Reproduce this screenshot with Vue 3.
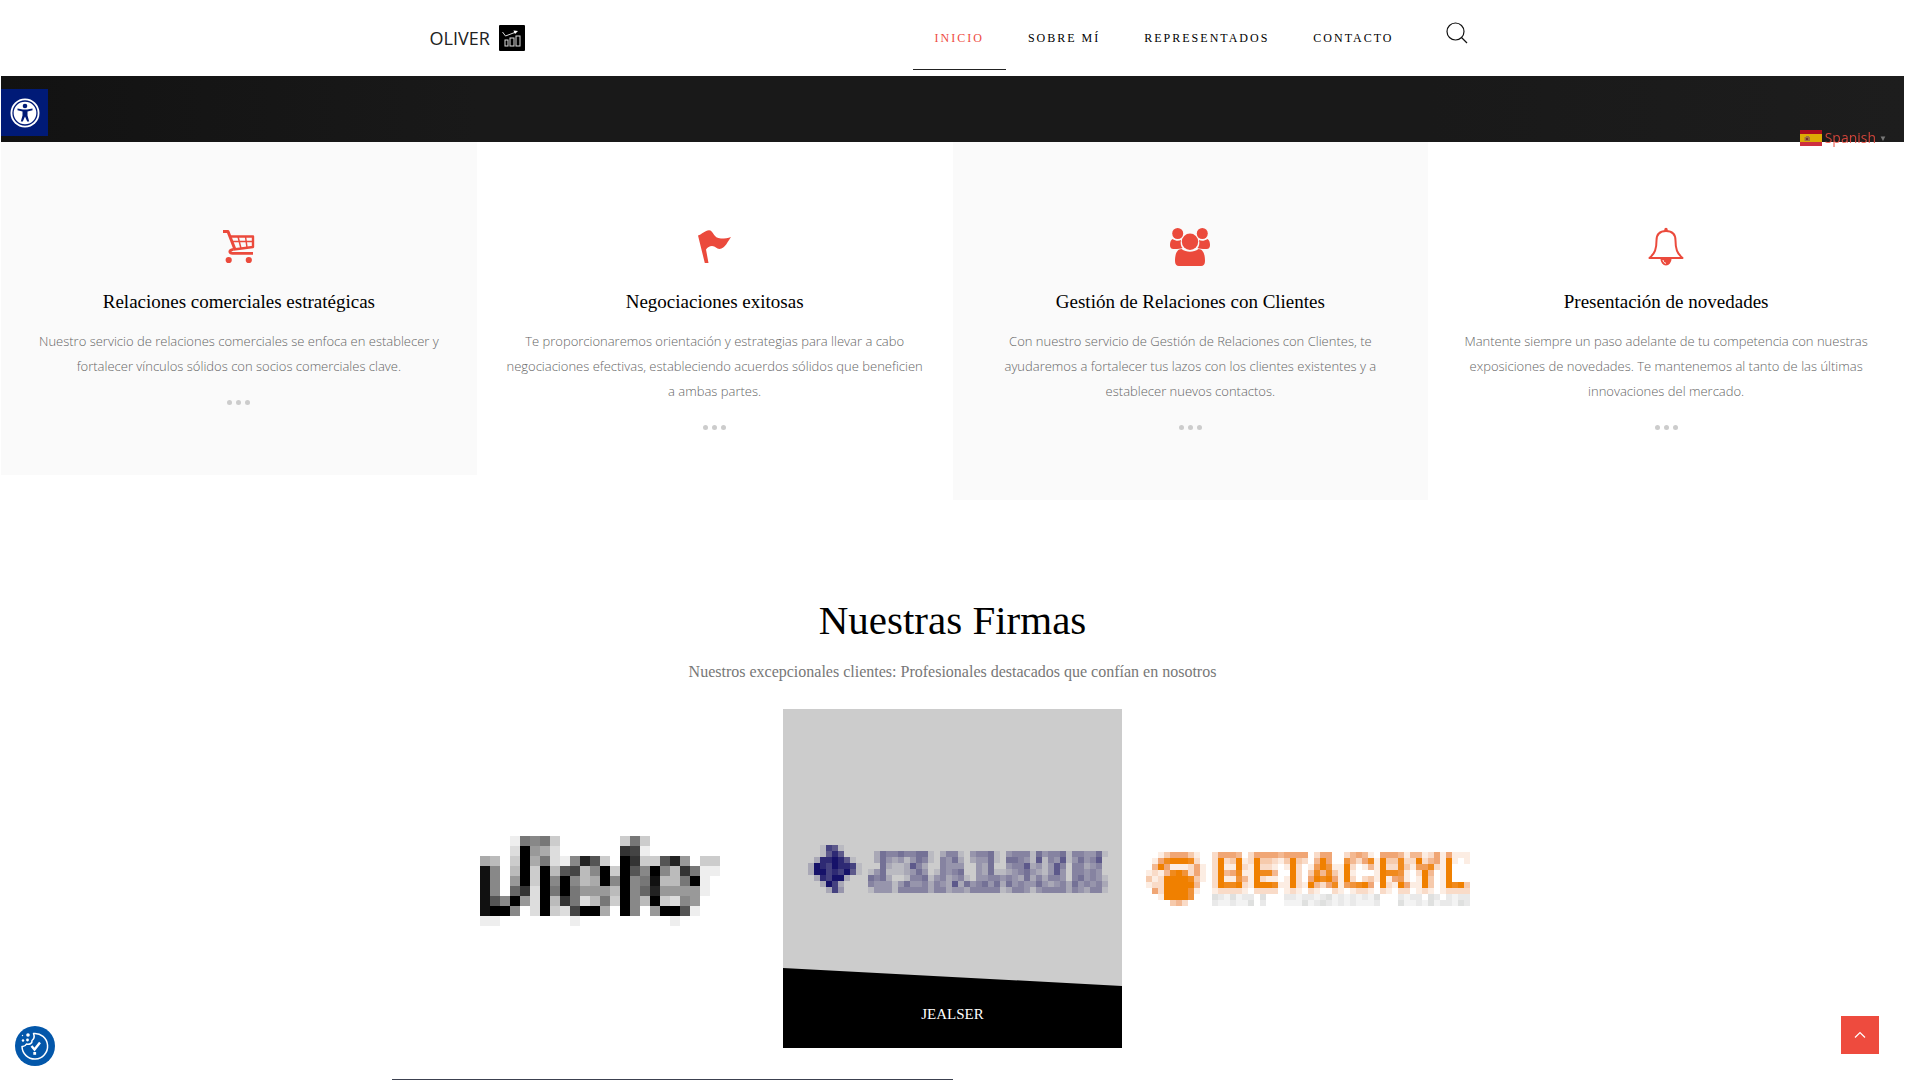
<script setup>
import { ref } from 'vue';

const active = ref('INICIO');
const menu = ['INICIO', 'SOBRE MÍ', 'REPRESENTADOS', 'CONTACTO'];

const services = [
  { icon: 'cart', title: 'Relaciones comerciales estratégicas', text: 'Nuestro servicio de relaciones comerciales se enfoca en establecer y fortalecer vínculos sólidos con socios comerciales clave.' },
  { icon: 'flag', title: 'Negociaciones exitosas', text: 'Te proporcionaremos orientación y estrategias para llevar a cabo negociaciones efectivas, estableciendo acuerdos sólidos que beneficien a ambas partes.' },
  { icon: 'people', title: 'Gestión de Relaciones con Clientes', text: 'Con nuestro servicio de Gestión de Relaciones con Clientes, te ayudaremos a fortalecer tus lazos con los clientes existentes y a establecer nuevos contactos.' },
  { icon: 'bell', title: 'Presentación de novedades', text: 'Mantente siempre un paso adelante de tu competencia con nuestras exposiciones de novedades. Te mantenemos al tanto de las últimas innovaciones del mercado.' },
];

// low resolution logos, one character per block
const vielo = [
  'ffffe787cffffffc7cfffffff',
  'ffffd09adffffff34efffffff',
  'fabfc0a7de825cf03cc529fcc',
  'f18fb0c0b54b80c05808b37ee',
  'f18f90c0808ba080871bb70ef',
  'f18f63d0707999b08629999ef',
  'f15809d0b37db7c08b0cd89ff',
  'f1008fd0cd400af08f9005eff',
  'feefffffffefffffffffeffff',
];

const jealser = [
  '00176100000000000000000000000000000000000000000000',
  '00168600000254454455102441034451034441534451443351',
  '02889861000253231354104352023351055431614361353460',
  '29879887100052112642004333003250034462313640442340',
  '29978796101351112353014345003251123453213630443430',
  '02879920005452001445134234103344343252424430453431',
  '00297200004333135334243262534535253433532342534342',
  '00027300001333144444244233244444124431344442432441',
];

const betacryl = [
  '001355531002555402555545555025500245410555414412515111',
  '015899982002923912933213932049500742581933822924519101',
  '049511125102911921922101920169711920141922831668219000',
  '121489725102945811988400920384831910001988710294019000',
  '312999983102911741921101920598951920231915610193019000',
  '122999994002988921999811921942581678950921951193019893',
  '052999971001222210222201210210021012210210220121012222',
  '00199997000cbacabb0c000bbabbabcabababac000babb0cb0babb',
  '00003420000baabaac0b000aaacabcbababaaab000caabacabbacb',
];

// two step gradient, level goes from 0 to 9 with the middle colour at 5
const ramp = (colors, level) => {
  const [from, to] = level <= 5 ? [colors[0], colors[1]] : [colors[1], colors[2]];
  const t = level <= 5 ? level / 5 : (level - 5) / 4;
  return 'rgb(' + from.map((v, i) => Math.round(v + (to[i] - v) * t)).join(',') + ')';
}

const grey = (c) => {
  const v = parseInt(c, 16) * 17;
  return `rgb(${v},${v},${v})`;
}
const navy = (c) => ramp([[204, 204, 204], [116, 113, 150], [22, 18, 105]], Number(c));
const greys = { a: '#f3f3f3', b: '#e9e9e9', c: '#dfe0df' };
const orange = (c) => greys[c] || ramp([[255, 255, 255], [240, 166, 117], [240, 128, 0]], Number(c));

const toBlocks = (rows, x, y, size, color, blank) => {
  const list = [];
  rows.forEach((row, r) => {
    [...row].forEach((c, i) => {
      if (c !== blank) {
        list.push({ x: x + i * size, y: y + r * size, size, fill: color(c) });
      }
    })
  })
  return list;
}

const firms = [
  { name: 'VIELO', open: false, blocks: toBlocks(vielo, 36, 127, 10, grey, 'f') },
  { name: 'JEALSER', open: true, blocks: toBlocks(jealser, 25, 136, 6, navy, '0') },
  { name: 'BETACRYL', open: false, blocks: toBlocks(betacryl, 14, 143, 6, orange, '0') },
];

const goTop = () => {
  window.scrollTo({ top: 0, behavior: 'smooth' });
}
</script>

<template>
  <div class="page">
    <header>
      <div class="bar">
        <a href="#" class="logo">
          OLIVER
          <svg width="26" height="26" viewBox="0 0 26 26">
            <rect width="26" height="26" rx="1" fill="#000" />
            <g fill="none" stroke="#ddd">
              <rect x="6" y="15" width="3" height="6" />
              <rect x="11" y="13" width="4" height="8" />
              <rect x="17" y="11" width="4" height="10" />
              <path d="M3.500 7l3 4L17 7" />
            </g>
            <path d="M14.500 5.500l4.500.5-3 3z" fill="#fff" />
          </svg>
        </a>
        <nav>
          <a v-for="item in menu" :key="item" href="#" :class="{ active: item === active }"
            @click.prevent="active = item">{{ item }}</a>
        </nav>
        <button class="search" aria-label="Buscar">
          <svg width="22" height="22" viewBox="0 0 22 22" fill="none" stroke="#111" stroke-width="1.200">
            <circle cx="9.500" cy="9.500" r="8.500" />
            <path d="M15.500 15.500l5.500 5.500" />
          </svg>
        </button>
      </div>
    </header>

    <div class="banner"></div>

    <section class="services">
      <article v-for="s in services" :key="s.title">
        <svg class="icon" width="40" height="40" viewBox="0 0 40 40">
          <g v-if="s.icon === 'cart'">
            <g fill="none" stroke="currentColor" stroke-linejoin="round">
              <path d="M4 4.500h5l7 18" stroke-width="3" />
              <path d="M11.500 9.500H34v10.500L14.500 22.500" stroke-width="2.400" />
              <path d="M14.500 22.300c-5 .7-4.500 4 -1 4H34" stroke-width="2.800" />
              <path d="M13 14.500h21M19 9.500l3 12M26.500 9.500l1.500 11" stroke-width="1.500" />
            </g>
            <circle cx="9.700" cy="33" r="3.100" fill="currentColor" />
            <circle cx="29.800" cy="33" r="3.100" fill="currentColor" />
          </g>
          <path v-else-if="s.icon === 'flag'" fill="currentColor"
            d="M3 8.500C7 7.500 10 3.300 14 3.300c4.500 0 4 8.200 12 8.200 4 0 7-.5 10-1.500-2.500 3-6 12-11.500 12-3 0-4-3-7.500-3-2.500 0-4.500 1.500-6 3.500L13.500 36H9.800z" />
          <g v-else-if="s.icon === 'people'" fill="currentColor">
            <circle cx="7.700" cy="6.500" r="5.500" />
            <circle cx="32.300" cy="6.500" r="5.500" />
            <path d="M2.500 12c3 2 6 2.200 8.500 1-.8 3.500-.2 6 1.500 8-2 .8-8 1.500-10.500.8-1.500-.5-2-2-2-4 0-2.500.8-5 2.500-5.800z" />
            <path d="M37.500 12c-3 2-6 2.200-8.500 1 .8 3.500.2 6-1.500 8 2 .8 8 1.500 10.500.8 1.500-.5 2-2 2-4 0-2.500-.8-5-2.500-5.800z" />
            <circle cx="20" cy="14.700" r="8.200" />
            <path d="M11.500 22c5 3.500 12 3.500 17 0 4.500 0 6.500 5 6.500 12 0 3.500-1.500 5-4 5H9c-2.500 0-4-1.500-4-5 0-7 2-12 6.500-12z" />
          </g>
          <g v-else>
            <path d="M20 4c-6.500 0-9.500 4-9.500 9.500C10.500 22 9 26 3.500 31h33C31 26 29.500 22 29.500 13.500 29.500 8 26.500 4 20 4z"
              fill="none" stroke="currentColor" stroke-width="2" stroke-linejoin="round" />
            <path d="M18.300 4V2.500a1.700 1.700 0 0 1 3.400 0V4zM14.500 32a5.500 6.500 0 0 0 11 0z" fill="currentColor" />
            <path d="M17 33c.2 1.800 1.200 3 3 3.300" fill="none" stroke="#fff" />
          </g>
        </svg>
        <h3>{{ s.title }}</h3>
        <p>{{ s.text }}</p>
        <div class="dots"><i></i><i></i><i></i></div>
      </article>
    </section>

    <section class="firms">
      <h2>Nuestras Firmas</h2>
      <p>Nuestros excepcionales clientes: Profesionales destacados que confían en nosotros</p>
      <div class="slider">
        <figure v-for="f in firms" :key="f.name" :class="{ open: f.open }">
          <svg viewBox="0 0 339 339" shape-rendering="crispEdges" role="img" :aria-label="f.name">
            <rect v-for="(b, i) in f.blocks" :key="i" :x="b.x" :y="b.y" :width="b.size" :height="b.size"
              :fill="b.fill" />
          </svg>
          <figcaption v-if="f.open">{{ f.name }}</figcaption>
        </figure>
      </div>
    </section>

    <div class="bottom">
      <div class="line"></div>
    </div>

    <button class="access" aria-label="Accesibilidad">
      <svg width="30" height="30" viewBox="0 0 30 30">
        <circle cx="15" cy="15" r="14.500" fill="#fff" />
        <circle cx="15" cy="15" r="12" fill="none" stroke="#001a77" stroke-width="1.300" />
        <circle cx="15" cy="8" r="2.300" fill="#001a77" />
        <path d="M7.500 10.500l5.500 1h4l5.500-1v1.800L17.500 13.500v4l1.700 6h-2L15 18.500 12.800 23.500h-2l1.700-6v-4l-5-1.200z"
          fill="#001a77" />
      </svg>
    </button>

    <a href="#" class="lang">
      <svg width="22" height="16" viewBox="0 0 22 16">
        <rect width="22" height="16" fill="#c60b1e" />
        <rect y="4" width="22" height="8" fill="#ffc400" />
        <path d="M4.500 7h1.500V6h3v1h1v4H4.500z" fill="#b9814a" />
        <rect x="6" y="8" width="2" height="2" fill="#8b2f2f" />
      </svg>
      <span>Spanish</span>
      <small>▼</small>
    </a>

    <button class="cookie" aria-label="Cookies">
      <svg width="40" height="40" viewBox="0 0 40 40">
        <circle cx="20" cy="20" r="20" fill="#0357aa" />
        <path d="M18.500 7.500A12.800 12.800 0 1 1 7 20.500c3 .3 4-1.500 4.500-2.500 2.500 1 6-.5 5.500-3.500 2-1.500 2.500-4.500 1.500-7z"
          fill="none" stroke="#fff" stroke-width="1.500" stroke-linejoin="round" />
        <g fill="#fff">
          <circle cx="13" cy="9" r="1.800" />
          <circle cx="8" cy="14.500" r="1.200" />
          <circle cx="12.500" cy="14" r="1.400" />
          <circle cx="7.500" cy="9.500" r=".700" />
          <rect x="18.300" y="26" width="2.800" height="2.800" />
        </g>
        <path d="M16.500 20l3 3.500 5.500-7" fill="none" stroke="#fff" stroke-width="2.400" />
      </svg>
    </button>

    <button class="top" aria-label="Volver arriba" @click="goTop">
      <svg width="12" height="8" viewBox="0 0 12 8" fill="none" stroke="#fff" stroke-width="1.200">
        <path d="M1 6.500l5-5 5 5" />
      </svg>
    </button>
  </div>
</template>

<style>
body {
  background: #fff;
}
</style>

<style scoped>
.page {
  padding: 0 1px;
  font-family: "Open Sans", "Liberation Sans", sans-serif;
}

a {
  text-decoration: none;
}

button {
  border: 0;
  padding: 0;
  background: none;
  cursor: pointer;
}

svg {
  display: block;
}

h2,
h3,
p,
figure {
  margin: 0;
}

.bar {
  box-sizing: border-box;
  max-width: 1170px;
  height: 76px;
  margin: 0 auto;
  padding: 0 70px 0 62px;
  display: flex;
  align-items: flex-start;
}

.logo {
  display: flex;
  align-items: center;
  gap: 9px;
  height: 76px;
  margin-right: auto;
  color: #222;
  font-size: 18px;
}

nav {
  display: flex;
}

nav a {
  padding: 30px 22px 22px;
  border-bottom: 1px solid transparent;
  color: #000;
  font-family: "Liberation Serif", serif;
  font-size: 12px;
  line-height: 17px;
  letter-spacing: 2px;
}

nav a.active {
  color: #ee4b3e;
  border-color: #222;
}

.search {
  margin: 22px 0 0 30px;
}

.banner {
  height: 66px;
  background: linear-gradient(90deg, #121212, #191919 25%, #191919 75%, #1d1d1d);
}

.services {
  display: grid;
  grid-template-columns: repeat(4, 1fr);
  align-items: start;
}

article {
  padding: 85px 26px 70px;
  text-align: center;
}

article:nth-child(odd) {
  background: #fafafa;
}

.icon {
  margin: 0 auto 20px;
  color: #eb4a3c;
}

h3 {
  margin-bottom: 12px;
  color: #000;
  font: 400 19px/30px "Liberation Serif", serif;
}

article p {
  color: #666;
  font-size: 13px;
  font-weight: 300;
  line-height: 25px;
}

.dots {
  display: flex;
  justify-content: center;
  gap: 4px;
  margin-top: 21px;
}

.dots i {
  width: 5px;
  height: 5px;
  border-radius: 50%;
  background: #ccc;
}

.firms {
  padding: 95px 20px 0;
  text-align: center;
  font-family: "Liberation Serif", serif;
}

h2 {
  color: #000;
  font-size: 41px;
  font-weight: 400;
  line-height: 50px;
}

.firms p {
  margin: 15px 0 25px;
  color: #777;
  font-size: 16px;
  line-height: 24px;
}

.slider {
  display: grid;
  grid-template-columns: repeat(3, 1fr);
  gap: 10px;
  max-width: 1037px;
  margin: 0 auto;
}

figure {
  position: relative;
}

figure.open {
  background: #ccc;
}

figcaption {
  position: absolute;
  right: 0;
  bottom: 0;
  left: 0;
  padding: 34px 0 22px;
  background: #000;
  clip-path: polygon(0 0, 100% 18px, 100% 100%, 0 100%);
  color: #fff;
  font-size: 15px;
  line-height: 24px;
}

.bottom {
  max-width: 1122px;
  margin: 31px auto 0;
}

.line {
  width: 50%;
  height: 1px;
  background: #3c4150;
}

.access,
.lang,
.cookie,
.top {
  position: fixed;
}

.access {
  top: 89px;
  left: 1px;
  width: 47px;
  height: 47px;
  display: flex;
  align-items: center;
  justify-content: center;
  background: #001a77;
}

.lang {
  top: 128px;
  right: 18px;
  display: flex;
  align-items: center;
  gap: 3px;
  color: #ee4b3e;
  font-size: 14px;
  line-height: 20px;
  opacity: .85;
}

.lang small {
  color: #888;
  font-size: 8px;
}

.cookie {
  bottom: 14px;
  left: 15px;
}

.top {
  right: 26px;
  bottom: 26px;
  width: 38px;
  height: 38px;
  display: flex;
  align-items: center;
  justify-content: center;
  background: #ee4b3e;
}
</style>
